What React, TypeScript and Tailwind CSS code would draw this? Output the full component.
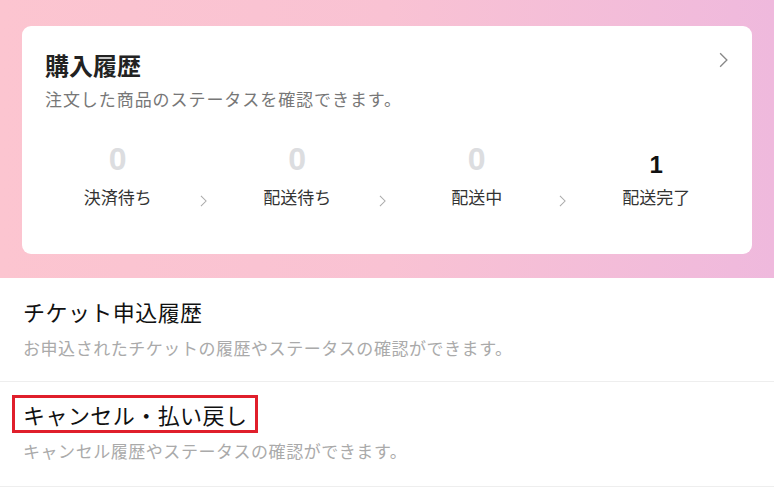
import React from 'react'

const jp = "font-['Noto_Sans_CJK_JP','Noto_Sans',sans-serif]"

const Chevron = ({ className }: { className: string }) => (
  <svg viewBox="0 0 8 14" className={className} fill="none" stroke="currentColor" strokeWidth="1.2">
    <path d="M1 1l6 6-6 6" />
  </svg>
)

const steps = [
  { label: '決済待ち', count: 0 },
  { label: '配送待ち', count: 0 },
  { label: '配送中', count: 0 },
  { label: '配送完了', count: 1 },
]

export default function App() {
  return (
    <div className={`w-[774px] h-[494px] bg-white overflow-hidden ${jp}`}>
      {/* Purchase history card on gradient */}
      <div className="bg-gradient-to-r from-[#fcc5d0] via-[#f9c2d3] to-[#efb9dd] px-[22px] pt-[26px] pb-[24px]">
        <div className="relative bg-white rounded-[9px] pt-[23px] pb-[46px]">
          <div className="px-[23px]">
            <h2 className="text-[24px] leading-[32px] font-bold text-[#222]">購入履歴</h2>
            <p className="mt-[7px] text-[17px] leading-[22px] tracking-[0.055em] text-[#777]">注文した商品のステータスを確認できます。</p>
          </div>
          <Chevron className="absolute right-[24px] top-[26px] w-[9px] h-[16px] text-[#888]" />

          <div className="mt-[33px] grid grid-cols-4 px-[6px]">
            {steps.map((s, i) => (
              <div key={s.label} className="relative flex flex-col items-center">
                <div className="h-[32px] font-['Liberation_Sans',Arial,sans-serif] font-bold">
                  {s.count === 0 ? (
                    <span className="block text-[32px] leading-[32px] text-[#dcdde0]">0</span>
                  ) : (
                    <span className="block pt-[12px] text-[24px] leading-[20px] text-[#111]">{s.count}</span>
                  )}
                </div>
                <div className="mt-[11px] text-[17px] leading-[22px] text-[#333]">{s.label}</div>
                {i < 3 && (
                  <Chevron className="absolute right-[1px] top-[52px] w-[7px] h-[12px] text-[#aaa]" />
                )}
              </div>
            ))}
          </div>
        </div>
      </div>

      {/* Ticket history */}
      <div className="px-[23px] pt-[19px] pb-[22px] border-b border-[#eeeeee]">
        <h3 className="text-[22px] leading-[28px] tracking-[0.02em] text-[#111]">チケット申込履歴</h3>
        <p className="mt-[12px] text-[17px] leading-[22px] tracking-[0.032em] text-[#aaa]">お申込されたチケットの履歴やステータスの確認ができます。</p>
      </div>

      {/* Cancel / refund */}
      <div className="px-[23px] pt-[13px] pb-[24px] border-b border-[#eeeeee]">
        <h3 className="inline-block -ml-[11px] border-[3px] border-[#e01f2b] pl-[8px] pr-[8px] py-[2px] text-[22px] leading-[28px] tracking-[0.02em] text-[#111]">
          キャンセル・払い戻し
        </h3>
        <p className="mt-[7px] text-[17px] leading-[22px] tracking-[0.032em] text-[#aaa]">キャンセル履歴やステータスの確認ができます。</p>
      </div>
    </div>
  )
}
